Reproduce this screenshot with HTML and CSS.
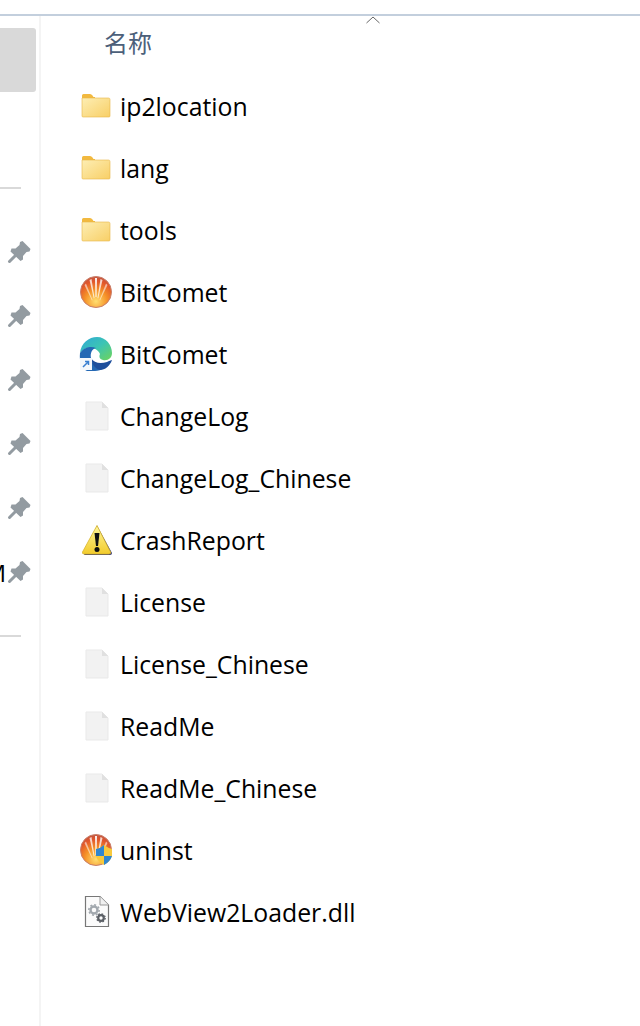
FILE: index.html
```html
<!DOCTYPE html>
<html lang="zh-CN">

<head>
    <meta charset="UTF-8">
    <title>BitComet</title>
    <link rel="stylesheet" href="styles.css">
</head>

<body>
    <svg class="defs" width="0" height="0">
        <defs>
            <linearGradient id="folderFill" x1="0" y1="0" x2="1" y2="1">
                <stop offset="0" stop-color="#fdeeb4" />
                <stop offset="1" stop-color="#f8cf66" />
            </linearGradient>
            <radialGradient id="cometFill" cx="0.5" cy="0.8" r="0.8">
                <stop offset="0" stop-color="#ffdf70" />
                <stop offset="0.45" stop-color="#f59228" />
                <stop offset="0.8" stop-color="#e2562a" />
                <stop offset="1" stop-color="#c2543f" />
            </radialGradient>
            <linearGradient id="warnFill" x1="0" y1="0" x2="0" y2="1">
                <stop offset="0" stop-color="#fff79a" />
                <stop offset="1" stop-color="#f2cb2c" />
            </linearGradient>
            <linearGradient id="edgeFill" x1="0" y1="0" x2="1" y2="1">
                <stop offset="0" stop-color="#2fa8d8" />
                <stop offset="0.5" stop-color="#3cc4b4" />
                <stop offset="1" stop-color="#6fd45a" />
            </linearGradient>
            <symbol id="folder" viewBox="0 0 30 24">
                <path d="M1 1.500 Q1 0 2.500 0 H9 Q10.500 0 11.500 1.500 L12.500 3 H14 V8 H1 Z" fill="#f2b93f" />
                <path d="M1 4 H27.500 Q29 4 29 5.500 V22 Q29 23 28 23 H2 Q1 23 1 22 Z" fill="url(#folderFill)" stroke="#e8b648" stroke-width="0.6" />
            </symbol>
            <symbol id="comet" viewBox="0 0 34 34">
                <circle cx="17" cy="17" r="15.500" fill="url(#cometFill)" stroke="#c9806c" stroke-width="1" />
                <path d="M16 3 L18 3 L17.500 22 H16.500 Z" fill="#fff" opacity="0.9" />
                <path d="M10.500 5 L12.500 4 L15.500 23 L14.800 23.500 Z" fill="#fff" opacity="0.75" />
                <path d="M23.500 5 L21.500 4 L18.500 23 L19.200 23.500 Z" fill="#fff" opacity="0.75" />
                <path d="M5.500 10 L7 8.500 L13.500 25 L13 25.500 Z" fill="#fff" opacity="0.55" />
                <path d="M28.500 10 L27 8.500 L20.500 25 L21 25.500 Z" fill="#fff" opacity="0.55" />
            </symbol>
            <symbol id="doc" viewBox="0 0 24 30">
                <path d="M1 1 H17 L23 7 V29 H1 Z" fill="#f2f2f2" stroke="#e9e9e9" stroke-width="1" />
                <path d="M17 1 V7 H23 Z" fill="#e0e0e0" />
            </symbol>
            <symbol id="pin" viewBox="0 0 24 24">
                <path d="M15.500 1 L23.500 9 L22.500 11.500 L19.500 12 L16 16 L16 19.500 L13.500 21 L3.500 11.500 L4.500 8.500 L8.500 8.500 L12.500 5 L13 2 Z" fill="#939ba1" />
                <path d="M9 15 L2.500 21.500" stroke="#939ba1" stroke-width="3" stroke-linecap="round" />
            </symbol>
        </defs>
    </svg>

    <div class="topLine"></div>

    <div class="window">
        <aside class="sidebar">
            <div class="selected"></div>
            <div class="sep firstSep"></div>
            <div class="pins">
                <div class="pinRow"><svg class="pinIcon"><use href="#pin" /></svg></div>
                <div class="pinRow"><svg class="pinIcon"><use href="#pin" /></svg></div>
                <div class="pinRow"><svg class="pinIcon"><use href="#pin" /></svg></div>
                <div class="pinRow"><svg class="pinIcon"><use href="#pin" /></svg></div>
                <div class="pinRow"><svg class="pinIcon"><use href="#pin" /></svg></div>
                <div class="pinRow"><span class="cutName">M</span><svg class="pinIcon"><use href="#pin" /></svg></div>
            </div>
            <div class="sep"></div>
        </aside>

        <main class="list">
            <div class="header">
                <span class="nameCol">名称</span>
                <svg class="sortArrow" width="16" height="8" viewBox="0 0 16 8"><path d="M1.500 7 L8 1 L14.500 7" fill="none" stroke="#666" stroke-width="1" /></svg>
            </div>

            <div class="row"><svg class="folderIcon"><use href="#folder" /></svg><span>ip2location</span></div>
            <div class="row"><svg class="folderIcon"><use href="#folder" /></svg><span>lang</span></div>
            <div class="row"><svg class="folderIcon"><use href="#folder" /></svg><span>tools</span></div>
            <div class="row"><svg class="icon"><use href="#comet" /></svg><span>BitComet</span></div>
            <div class="row">
                <svg class="icon" viewBox="0 0 34 34">
                    <path d="M1 16 C2 6 10 0 18 0 C27 0 33 8 33 16 C33 21 29 24 24 23 C20 22 20 19 21 17 C19 12 13 10 8 11 C5 12 2 14 1 16 Z" fill="url(#edgeFill)" />
                    <path d="M1 16 C5 10 12 9 17 11 C13 12 11 16 12 21 C13 27 19 33 26 31 C22 33 19 34 16 34 H8 C3 32 0 25 1 16 Z" fill="#2468b4" />
                    <path d="M12 21 C15 26 21 27 28 25 C30 24 32 23 33 23 C31 29 26 33 21 33 C16 32 13 27 12 21 Z" fill="#1e4f9c" />
                    <rect x="1" y="21" width="12" height="12" fill="#f4f7fb" />
                    <path d="M4 30 L9.500 24.500 M6 24.500 H9.500 V28" fill="none" stroke="#3a7fd0" stroke-width="1.500" />
                </svg>
                <span>BitComet</span>
            </div>
            <div class="row"><svg class="docIcon"><use href="#doc" /></svg><span>ChangeLog</span></div>
            <div class="row"><svg class="docIcon"><use href="#doc" /></svg><span>ChangeLog_Chinese</span></div>
            <div class="row">
                <svg class="icon" viewBox="0 0 34 34">
                    <path d="M18 2.500 L33 30 Q33 32 31 32 H5 Z" fill="#3c3c6c" />
                    <path d="M18 2.500 L31.500 29 Q32 31 30 31 H5 Q3 31 3.500 29 Z" fill="url(#warnFill)" stroke="#d9b52c" stroke-width="0.8" stroke-linejoin="round" />
                    <path d="M15.500 10 H20.500 L19 23 H17 Z" fill="#111" />
                    <circle cx="18" cy="26.500" r="2.500" fill="#111" />
                </svg>
                <span>CrashReport</span>
            </div>
            <div class="row"><svg class="docIcon"><use href="#doc" /></svg><span>License</span></div>
            <div class="row"><svg class="docIcon"><use href="#doc" /></svg><span>License_Chinese</span></div>
            <div class="row"><svg class="docIcon"><use href="#doc" /></svg><span>ReadMe</span></div>
            <div class="row"><svg class="docIcon"><use href="#doc" /></svg><span>ReadMe_Chinese</span></div>
            <div class="row">
                <svg class="icon" viewBox="0 0 34 34">
                    <use href="#comet" width="34" height="34" />
                    <path d="M17 16 Q22 15 25 12 Q29 15 33 16 V23 Q31 29 25 32 Q19 29 17 23 Z" fill="#f7c93e" />
                    <path d="M25 12 V23 H17 V16 Q22 15 25 12 Z M25 23 H33 Q31 29 25 32 Z" fill="#2f86d0" />
                </svg>
                <span>uninst</span>
            </div>
            <div class="row">
                <svg class="icon" viewBox="0 0 34 34">
                    <path d="M6.500 1.500 H21 L29.500 10 V31.500 H6.500 Z" fill="#fbfbfb" stroke="#777" stroke-width="1.200" />
                    <path d="M21 1.500 V10 H29.500" fill="#f0f0f0" stroke="#999" stroke-width="1" />
                    <circle cx="15" cy="15" r="3.500" fill="none" stroke="#a2a8ae" stroke-width="2.400" />
                    <circle cx="15" cy="15" r="5.200" fill="none" stroke="#a2a8ae" stroke-width="1.500" stroke-dasharray="2 2" />
                    <circle cx="22" cy="23" r="2.800" fill="none" stroke="#5c6066" stroke-width="2.200" />
                    <circle cx="22" cy="23" r="4.200" fill="none" stroke="#5c6066" stroke-width="1.300" stroke-dasharray="1.600 1.700" />
                </svg>
                <span>WebView2Loader.dll</span>
            </div>
        </main>
    </div>
</body>

</html>
```

FILE: styles.css
```css
* {
    box-sizing: border-box;
}

html,
body {
    margin: 0;
    height: 1026px;
    overflow: hidden;
}

body {
    background: #fff;
    color: #000;
    font-family: "Open Sans", "Noto Sans CJK SC", sans-serif;
}

.defs {
    position: absolute;
}

.topLine {
    margin-top: 14px;
    height: 2px;
    background: #c3cfdd;
}

.window {
    display: flex;
    height: 1010px;
}

/* left nav pane */
.sidebar {
    width: 41px;
    flex-shrink: 0;
    border-right: 2px solid #f4f4f4;
    padding-top: 12px;
}

.selected {
    width: 36px;
    height: 64px;
    background: #d9d9d9;
    border-radius: 0 3px 3px 0;
}

.sep {
    width: 21px;
    height: 2px;
    background: #d9d9d9;
}

.firstSep {
    margin-top: 95px;
}

.pins {
    padding-top: 31px;
    padding-bottom: 31px;
}

.pinRow {
    height: 64px;
    display: flex;
    align-items: center;
    justify-content: flex-end;
    overflow: hidden;
    padding-right: 8px;
}

.pinIcon {
    width: 24px;
    height: 24px;
    flex-shrink: 0;
}

.cutName {
    font-size: 24px;
    margin-right: 1px;
    flex-shrink: 0;
}

/* file list */
.list {
    flex: 1;
    padding-left: 38px;
}

.header {
    height: 59px;
    position: relative;
    padding-left: 25px;
    padding-top: 8px;
}

.nameCol {
    font-size: 24px;
    color: #4c607a;
}

.sortArrow {
    position: absolute;
    left: 286px;
    top: 0;
}

.row {
    height: 62px;
    display: flex;
    align-items: center;
    font-size: 24.8px;
}

.icon {
    width: 34px;
    height: 34px;
    margin-right: 7px;
    flex-shrink: 0;
}

.folderIcon {
    width: 30px;
    height: 24px;
    margin: 0 9px 0 2px;
    flex-shrink: 0;
}

.docIcon {
    width: 24px;
    height: 30px;
    margin: 0 11px 0 6px;
    flex-shrink: 0;
}
```
